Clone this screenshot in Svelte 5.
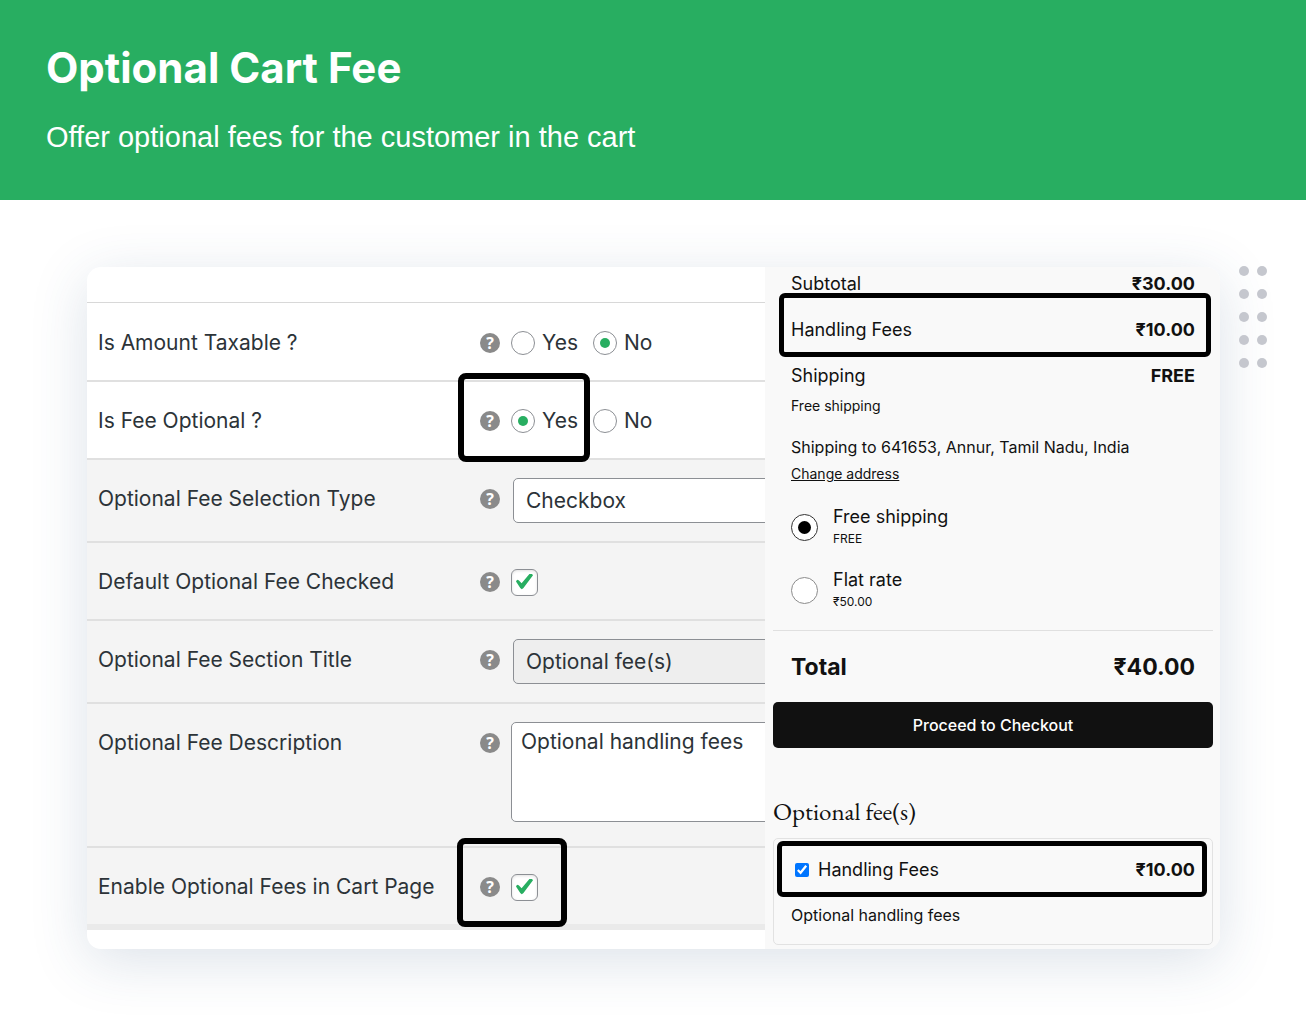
<script lang="ts">
	let taxable = $state('no');
	let optional = $state('yes');
	let selectionType = $state('Checkbox');
	let defaultChecked = $state(true);
	let description = $state('Optional handling fees');
	let showInCart = $state(true);
	let shipping = $state('free');
	let handling = $state(true);

	const shippingRates = [
		{ id: 'free', name: 'Free shipping', price: 'FREE' },
		{ id: 'flat', name: 'Flat rate', price: '₹50.00' }
	];

	const dots = Array.from({ length: 10 });
</script>

{#snippet help()}
	<span class="help" title="Help">?</span>
{/snippet}

<header class="hero">
	<h1>Optional Cart Fee</h1>
	<p>Offer optional fees for the customer in the cart</p>
</header>

<main class="stage">
	<div class="card">
		<form class="settings">
			<div class="spacer"></div>

			<div class="row">
				<span class="label" id="taxable-label">Is Amount Taxable ?</span>
				{@render help()}
				<div class="choices" role="radiogroup" aria-labelledby="taxable-label">
					<label><input type="radio" name="taxable" value="yes" bind:group={taxable} />Yes</label>
					<label><input type="radio" name="taxable" value="no" bind:group={taxable} />No</label>
				</div>
			</div>

			<div class="row">
				<span class="label" id="optional-label">Is Fee Optional ?</span>
				{@render help()}
				<div class="choices" role="radiogroup" aria-labelledby="optional-label">
					<label><input type="radio" name="optional" value="yes" bind:group={optional} />Yes</label>
					<label><input type="radio" name="optional" value="no" bind:group={optional} />No</label>
				</div>
				<span class="frame frame-yes"></span>
			</div>

			<div class="row shaded">
				<label class="label" for="selection-type">Optional Fee Selection Type</label>
				{@render help()}
				<select id="selection-type" class="field" bind:value={selectionType}>
					<option>Checkbox</option>
					<option>Radio</option>
				</select>
			</div>

			<div class="row shaded">
				<label class="label" for="default-checked">Default Optional Fee Checked</label>
				{@render help()}
				<div class="choices">
					<input id="default-checked" type="checkbox" bind:checked={defaultChecked} />
				</div>
			</div>

			<div class="row shaded">
				<label class="label" for="section-title">Optional Fee Section Title</label>
				{@render help()}
				<input id="section-title" class="field" type="text" value="Optional fee(s)" readonly />
			</div>

			<div class="row shaded">
				<label class="label" for="description">Optional Fee Description</label>
				{@render help()}
				<textarea id="description" bind:value={description}></textarea>
			</div>

			<div class="row shaded last">
				<label class="label" for="show-in-cart">Enable Optional Fees in Cart Page</label>
				{@render help()}
				<div class="choices">
					<input id="show-in-cart" type="checkbox" bind:checked={showInCart} />
				</div>
				<span class="frame frame-check"></span>
			</div>
		</form>

		<section class="cart">
			<div class="line subtotal"><span>Subtotal</span><strong>₹30.00</strong></div>
			<div class="line">
				<span>Handling Fees</span><strong>₹10.00</strong>
				<span class="frame frame-line"></span>
			</div>
			<div class="line"><span>Shipping</span><strong>FREE</strong></div>

			<div class="shipping">
				<p class="small">Free shipping</p>
				<p class="address">Shipping to 641653, Annur, Tamil Nadu, India</p>
				<a class="small" href="#address">Change address</a>

				{#each shippingRates as rate (rate.id)}
					<label class="rate">
						<input type="radio" name="shipping" value={rate.id} bind:group={shipping} />
						<span class="rate-text">
							<span>{rate.name}</span>
							<small>{rate.price}</small>
						</span>
					</label>
				{/each}
			</div>

			<div class="total"><span>Total</span><span>₹40.00</span></div>
			<button class="checkout" type="button">Proceed to Checkout</button>

			<h2>Optional fee(s)</h2>
			<div class="fees">
				<div class="fee">
					<label><input type="checkbox" bind:checked={handling} />Handling Fees</label>
					<strong>₹10.00</strong>
					<span class="frame frame-fee"></span>
				</div>
				<p>Optional handling fees</p>
			</div>
		</section>
	</div>

	<div class="dots" aria-hidden="true">
		{#each dots as _}<i></i>{/each}
	</div>
</main>

<style>
	:global(body) {
		margin: 0;
		background: #fff;
		font-family: Inter, 'Liberation Sans', sans-serif;
	}
	* {
		box-sizing: border-box;
	}
	h1,
	h2,
	p {
		margin: 0;
	}
	input,
	select,
	textarea,
	button {
		margin: 0;
		font: inherit;
		color: inherit;
	}

	.hero {
		padding: 40px 46px 43px;
		background: #28ae61;
		color: #fff;
	}
	.hero h1 {
		font-size: 42px;
		line-height: 56px;
		font-weight: 700;
	}
	.hero p {
		margin-top: 21px;
		font-family: 'Liberation Sans', sans-serif;
		font-size: 29px;
		line-height: 40px;
	}

	.stage {
		position: relative;
		padding: 67px 86px 67px 87px;
	}
	.card {
		display: grid;
		grid-template-columns: minmax(0, 1fr) 455px;
		border-radius: 14px;
		overflow: hidden;
		background: #fff;
		box-shadow: 0 12px 56px rgba(50, 85, 125, 0.17);
	}
	.dots {
		position: absolute;
		top: 66px;
		right: 39px;
		display: grid;
		grid-template-columns: 10px 10px;
		gap: 13px 8px;
	}
	.dots i {
		height: 10px;
		border-radius: 50%;
		background: #c5c7ce;
	}

	/* settings side */
	.settings {
		overflow: hidden;
		color: #2c3338;
		font-size: 21px;
		line-height: 26px;
	}
	.spacer {
		height: 36px;
		margin-bottom: 1px;
		border-bottom: 1px solid #d8d8d8;
	}
	.row {
		position: relative;
		display: grid;
		grid-template-columns: 371px 20px 300px;
		align-items: start;
		column-gap: 11px;
		padding: 18px 0 16px 11px;
		border-bottom: 2px solid #e0e0e0;
	}
	.shaded {
		background: #f4f4f4;
	}
	.last {
		border-bottom: 6px solid #eaeaea;
	}
	.label {
		padding-top: 8px;
	}
	.help {
		width: 20px;
		height: 20px;
		margin-top: 11px;
		border-radius: 50%;
		background: #8a8a8a;
		color: #fff;
		font: 700 16px/20px 'Open Sans', sans-serif;
		text-align: center;
	}
	.choices {
		display: flex;
		align-items: center;
		gap: 15px;
		height: 42px;
	}
	.choices label {
		display: flex;
		align-items: center;
		gap: 7px;
	}
	.choices input {
		appearance: none;
		display: grid;
		place-items: center;
		border: 1px solid #8c8f94;
		background: #fff;
	}
	.choices input[type='radio'] {
		width: 24px;
		height: 24px;
		border-radius: 50%;
	}
	.choices input[type='radio']:checked::before {
		content: '';
		width: 10px;
		height: 10px;
		border-radius: 50%;
		background: #28ae61;
	}
	.choices input[type='checkbox'] {
		width: 27px;
		height: 27px;
		border-radius: 6px;
		box-shadow: inset 0 1px 3px rgba(0, 0, 0, 0.12);
	}
	.choices input[type='checkbox']:checked::before {
		content: '';
		width: 17px;
		height: 17px;
		background: #28ae61;
		clip-path: polygon(0 47%, 6% 37%, 16% 39%, 33% 58%, 80% 2%, 92% 0, 100% 11%, 44% 86%, 34% 92%, 25% 86%);
	}
	.field {
		appearance: none;
		width: 300px;
		height: 45px;
		margin: 0 0 2px 2px;
		padding: 0 12px;
		border: 1px solid #8c8f94;
		border-radius: 5px;
		background: #fff;
	}
	.field:read-only:not(select) {
		background: #eee;
	}
	textarea {
		width: 300px;
		height: 100px;
		margin-bottom: 8px;
		padding: 6px 9px;
		border: 1px solid #8c8f94;
		border-radius: 5px;
		resize: none;
	}

	/* highlight frames drawn over the rows */
	.frame {
		position: absolute;
		z-index: 1;
		border: 6px solid #000;
		border-radius: 8px;
		pointer-events: none;
	}
	.frame-yes {
		top: -9px;
		left: 371px;
		width: 132px;
		height: 89px;
	}
	.frame-check {
		top: -10px;
		left: 370px;
		width: 110px;
		height: 89px;
	}
	.frame-line {
		inset: -14px -16px -4px -12px;
		border-width: 5px;
		border-radius: 6px;
	}
	.frame-fee {
		inset: 2px 5px 4px 3px;
		border-width: 5px;
		border-radius: 6px;
	}

	/* cart side */
	.cart {
		padding: 0 7px 4px 8px;
		background: #f9f9f9;
		color: #111;
		font-size: 18px;
		line-height: 24px;
	}
	.line {
		position: relative;
		display: flex;
		justify-content: space-between;
		margin: 0 18px;
		padding: 11px 0;
	}
	.subtotal {
		padding-top: 5px;
	}
	.shipping {
		padding: 0 18px 18px;
		border-bottom: 1px solid #e0e0e0;
	}
	.small {
		display: block;
		font-size: 14px;
		line-height: 20px;
		color: inherit;
	}
	p.small {
		margin-top: -3px;
	}
	a.small {
		margin-bottom: 21px;
	}
	.address {
		margin: 19px 0 5px;
		font-size: 16px;
	}
	.rate {
		display: flex;
		align-items: center;
		gap: 15px;
	}
	.rate + .rate {
		margin-top: 19px;
	}
	.rate input {
		appearance: none;
		display: grid;
		place-items: center;
		width: 27px;
		height: 27px;
		border: 1px solid #8c8c8c;
		border-radius: 50%;
		background: #fff;
	}
	.rate input:checked {
		border-color: #333;
	}
	.rate input:checked::before {
		content: '';
		width: 13px;
		height: 13px;
		border-radius: 50%;
		background: #000;
	}
	.rate-text {
		display: flex;
		flex-direction: column;
	}
	.rate small {
		font-size: 12px;
		line-height: 20px;
	}
	.total {
		display: flex;
		justify-content: space-between;
		padding: 20px 18px 19px;
		font-size: 23px;
		line-height: 32px;
		font-weight: 700;
	}
	.checkout {
		display: block;
		width: 100%;
		height: 46px;
		border: 0;
		border-radius: 5px;
		background: #111;
		color: #fff;
		font-size: 16px;
		font-weight: 500;
	}
	h2 {
		margin: 47px 0 11px;
		font: 400 25px/32px 'EB Garamond', 'Liberation Serif', serif;
	}
	.fees {
		border: 1px solid #e2e2e2;
		border-radius: 5px;
		padding-bottom: 17px;
	}
	.fee {
		position: relative;
		display: flex;
		justify-content: space-between;
		padding: 19px 17px;
	}
	.fee label {
		display: flex;
		align-items: center;
		gap: 9px;
		padding-left: 4px;
	}
	.fee input {
		width: 14px;
		height: 14px;
		accent-color: #0075ff;
	}
	.fees p {
		padding: 2px 17px 0;
		font-size: 16px;
	}
</style>
